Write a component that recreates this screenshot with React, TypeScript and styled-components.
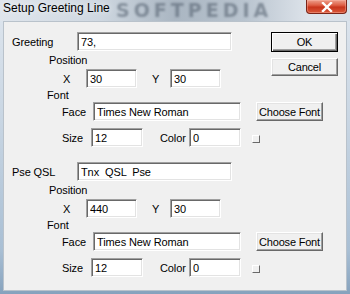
import React from 'react';
import styled, { createGlobalStyle } from 'styled-components';

const UI_FONT = '"Liberation Sans", Arial, sans-serif';

const GlobalStyle = createGlobalStyle`
  html, body {
    margin: 0;
    padding: 0;
  }
  body {
    width: 350px;
    height: 294px;
    overflow: hidden;
    font-family: ${UI_FONT};
    font-size: 11px;
    letter-spacing: -0.1px;
    color: #000;
  }
`;

const Window = styled.div`
  width: 350px;
  height: 294px;
  box-sizing: border-box;
  display: flex;
  flex-direction: column;
  background: linear-gradient(180deg, #dfe6ee 0%, #c9d6e3 40%, #a9bfd4 85%, #86a2bd 100%);
  overflow: hidden;
`;

const TitleBar = styled.div`
  position: relative;
  height: 21px;
  flex: none;
  display: flex;
  align-items: flex-start;
  padding-left: 3px;
  background: linear-gradient(90deg, #dfe5ec 0%, #cfd8e1 28%, #aab6c2 50%, #b9c4cf 70%, #dde3ea 88%, #d9e0e8 100%);
`;

const Title = styled.span`
  position: relative;
  z-index: 1;
  font-family: "Liberation Sans", Arial, sans-serif;
  font-size: 12px;
  letter-spacing: 0;
  line-height: 16px;
  color: #000;
  text-shadow: 0 0 6px rgba(255, 255, 255, 0.9);
`;

const Watermark = styled.span`
  position: absolute;
  left: 116px;
  top: 0;
  font-family: "DejaVu Sans", sans-serif;
  font-weight: 700;
  font-size: 19px;
  line-height: 20px;
  letter-spacing: 4px;
  color: rgba(80, 92, 108, 0.55);
  filter: blur(1.3px);
`;

const CloseButton = styled.div`
  position: relative;
  z-index: 1;
  margin-left: auto;
  margin-right: 3px;
  width: 41px;
  height: 14px;
  box-sizing: border-box;
  border: 1px solid #7a2418;
  border-top: none;
  border-radius: 0 0 4px 4px;
  background: linear-gradient(180deg, #eda08c 0%, #de5f45 40%, #c8351c 55%, #d9583a 100%);
  box-shadow: inset 0 0 0 1px rgba(255, 190, 175, 0.4);
  display: flex;
  align-items: center;
  justify-content: center;
`;

const Client = styled.div`
  flex: 1;
  margin: 0 3px 3px 3px;
  border: 1px solid #b9c2cb;
  background: #f0f0f0;
  padding: 10px 8px 0 8px;
  display: flex;
  flex-direction: column;
`;

const SectionBox = styled.div<{ $first?: boolean }>`
  display: flex;
  flex-direction: column;
  margin-top: ${p => (p.$first ? 0 : 15)}px;
`;

const TopBlock = styled.div`
  display: flex;
  align-items: flex-start;
`;

const Fields = styled.div`
  display: flex;
  flex-direction: column;
`;

const SideButtons = styled.div`
  margin-left: auto;
  display: flex;
  flex-direction: column;
  gap: 6px;
`;

const Row = styled.div<{ $indent?: number; $top?: number }>`
  display: flex;
  align-items: center;
  height: 19px;
  padding-left: ${p => p.$indent ?? 0}px;
  margin-top: ${p => p.$top ?? 0}px;
`;

const Label = styled.span<{ $w: number; $gap?: number }>`
  width: ${p => p.$w}px;
  margin-left: ${p => p.$gap ?? 0}px;
  flex: none;
  white-space: nowrap;
`;

const SubLabel = styled.div<{ $indent: number; $h: number }>`
  height: ${p => p.$h}px;
  line-height: ${p => p.$h}px;
  padding-left: ${p => p.$indent}px;
`;

const Edit = styled.input<{ $w: number }>`
  width: ${p => p.$w}px;
  height: 19px;
  box-sizing: border-box;
  flex: none;
  margin: 0;
  padding: 1px 2px 0 3px;
  font-family: ${UI_FONT};
  font-size: 11px;
  letter-spacing: -0.1px;
  color: #000;
  background: #fff;
  border: 1px solid;
  border-color: #a0a0a0 #fff #fff #a0a0a0;
  box-shadow: inset 1px 1px 0 #696969, inset -1px -1px 0 #e3e3e3;
  outline: none;
`;

const Button = styled.div<{ $default?: boolean; $h?: number; $gap?: number }>`
  width: 67px;
  height: ${p => p.$h ?? 19}px;
  box-sizing: border-box;
  flex: none;
  margin-left: ${p => p.$gap ?? 0}px;
  display: flex;
  align-items: center;
  justify-content: center;
  white-space: nowrap;
  font-size: 11px;
  letter-spacing: -0.2px;
  background: #f0f0f0;
  border: 1px solid;
  border-color: ${p => (p.$default ? '#000' : '#fff #696969 #696969 #fff')};
  box-shadow: ${p =>
    p.$default
      ? 'inset 1px 1px 0 #fff, inset -1px -1px 0 #696969, inset -2px -2px 0 #a0a0a0'
      : 'inset -1px -1px 0 #a0a0a0, inset 1px 1px 0 #e3e3e3'};
`;

const ColorPick = styled.div`
  width: 8px;
  height: 8px;
  box-sizing: border-box;
  margin-left: 11px;
  margin-top: 2px;
  border: 1px solid;
  border-color: #fff #696969 #696969 #fff;
  background: #f0f0f0;
`;

interface SectionProps {
  first?: boolean
  label: string
  text: string
  x: string
  y: string
  face: string
  size: string
  color: string
  side?: React.ReactNode
}

const Section: React.FC<SectionProps> = ({ first, label, text, x, y, face, size, color, side }) => (
  <SectionBox $first={first}>
    <TopBlock>
      <Fields>
        <Row>
          <Label $w={65}>{label}</Label>
          <Edit $w={155} defaultValue={text} readOnly />
        </Row>
        <SubLabel $indent={37} $h={18}>Position</SubLabel>
        <Row $indent={51}>
          <Label $w={23}>X</Label>
          <Edit $w={51} defaultValue={x} readOnly />
          <Label $w={18} $gap={15}>Y</Label>
          <Edit $w={51} defaultValue={y} readOnly />
        </Row>
      </Fields>
      {side && <SideButtons>{side}</SideButtons>}
    </TopBlock>
    <SubLabel $indent={35} $h={14}>Font</SubLabel>
    <Row $indent={50}>
      <Label $w={31}>Face</Label>
      <Edit $w={148} defaultValue={face} readOnly />
      <Button $gap={15} $h={19}>Choose Font</Button>
    </Row>
    <Row $indent={50} $top={7}>
      <Label $w={29}>Size</Label>
      <Edit $w={52} defaultValue={size} readOnly />
      <Label $w={29} $gap={17}>Color</Label>
      <Edit $w={52} defaultValue={color} readOnly />
      <ColorPick />
    </Row>
  </SectionBox>
);

const CloseX = () => (
  <svg width="12" height="10" viewBox="0 0 12 10">
    <path d="M2 1 L10 9 M10 1 L2 9" stroke="#fff" strokeWidth="2.4" strokeLinecap="square" />
  </svg>
);

const App: React.FC = () => (
  <>
    <GlobalStyle />
    <Window>
      <TitleBar>
        <Watermark>SOFTPEDIA</Watermark>
        <Title>Setup Greeting Line</Title>
        <CloseButton>
          <CloseX />
        </CloseButton>
      </TitleBar>
      <Client>
        <Section
          first
          label="Greeting"
          text="73,"
          x="30"
          y="30"
          face="Times New Roman"
          size="12"
          color="0"
          side={
            <>
              <Button $default $h={20}>OK</Button>
              <Button $h={18}>Cancel</Button>
            </>
          }
        />
        <Section
          label="Pse QSL"
          text="Tnx  QSL  Pse"
          x="440"
          y="30"
          face="Times New Roman"
          size="12"
          color="0"
        />
      </Client>
    </Window>
  </>
);

export default App;
